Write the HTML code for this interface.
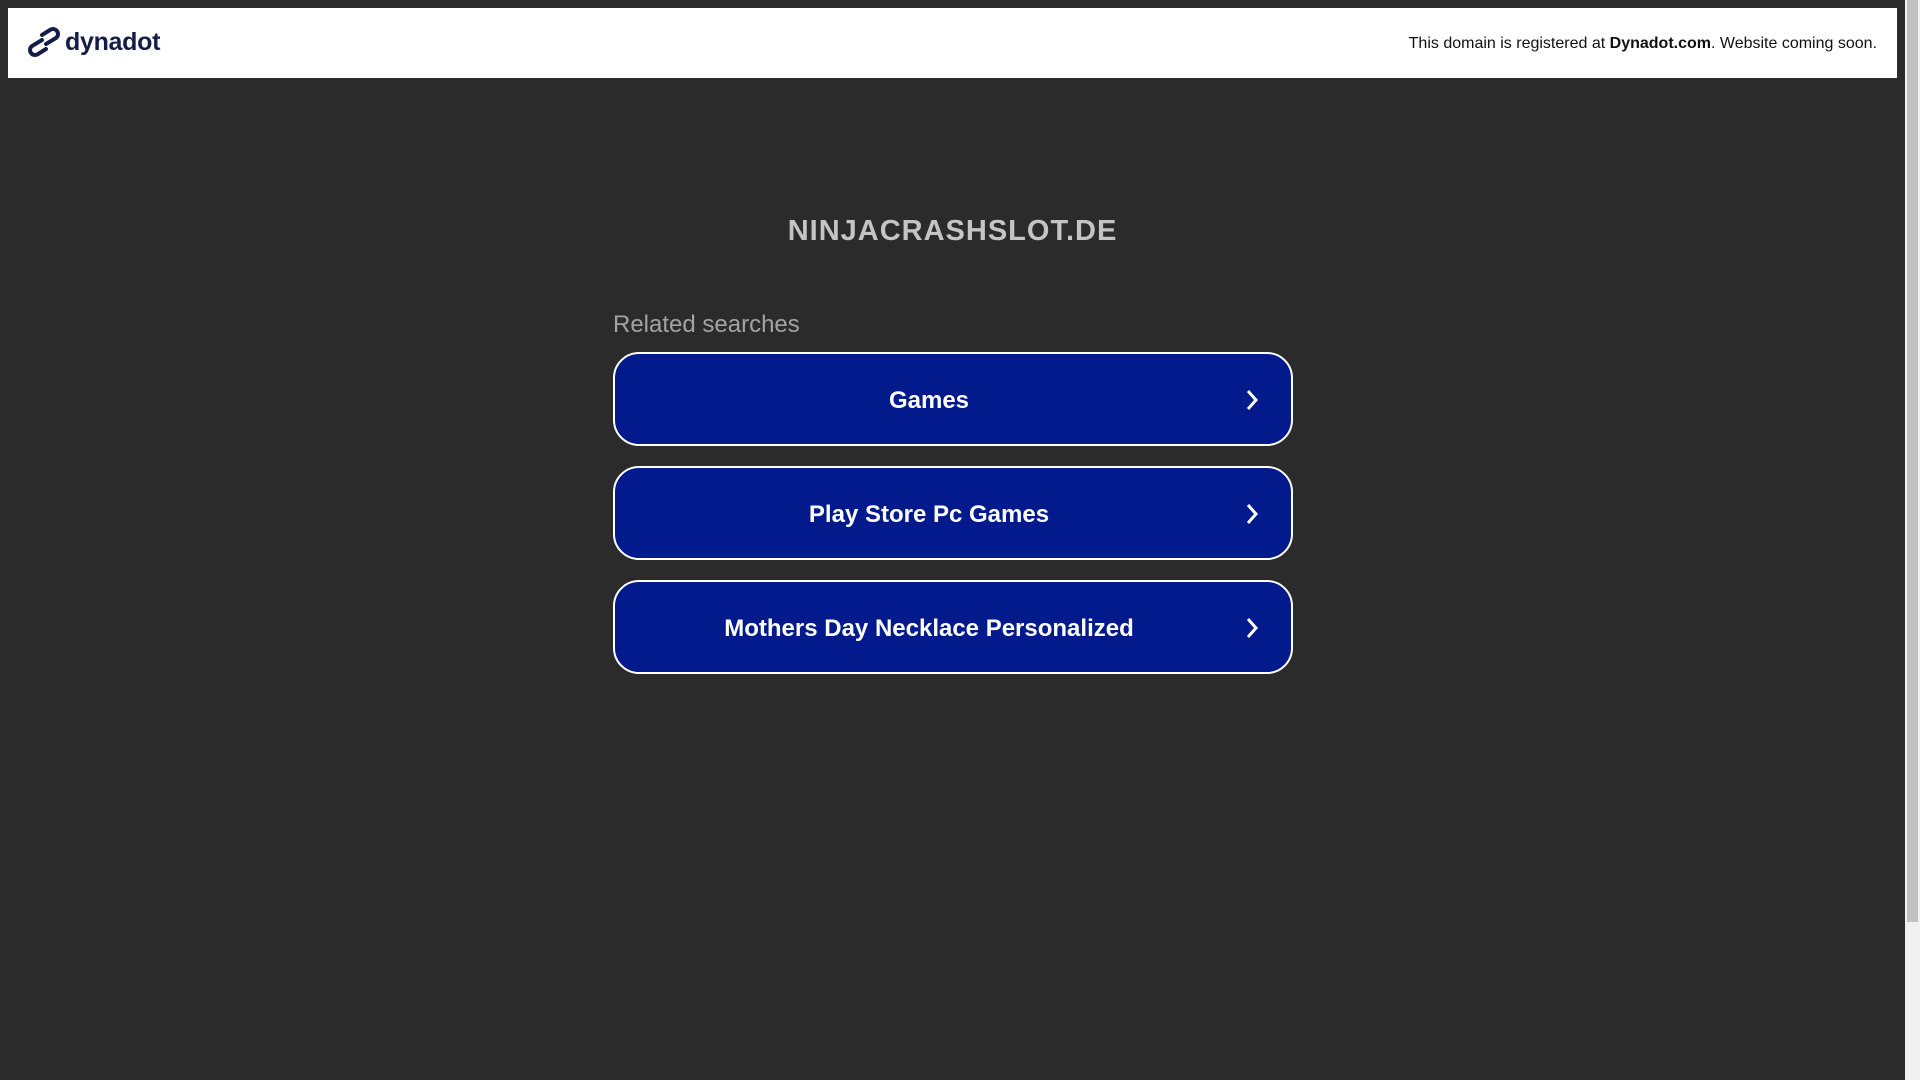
<!DOCTYPE html>
<html><head><meta charset="utf-8"><style>
html,body{margin:0;padding:0}
body{width:1920px;height:1080px;background:#2b2b2b;position:relative;overflow:hidden;font-family:"Liberation Sans",Arial,sans-serif}
.sb{position:absolute;left:1905px;top:0;width:15px;height:1080px;background:#f1f1f1}
.sb i{position:absolute;left:2px;top:0;width:11px;height:922px;background:#c1c1c1}
.hdr{position:absolute;left:8px;top:8px;width:1889px;height:70px;background:#fff}
.logo{position:absolute;left:20px;top:19px;display:flex;align-items:center}
.logo span{font-weight:bold;font-size:25px;color:#151c47;margin-left:5px;letter-spacing:-0.3px}
.rt{position:absolute;right:20px;top:27px;font-size:16px;color:#111}
h1{position:absolute;left:0;width:1905px;top:215px;margin:0;text-align:center;font-size:29px;color:#c4c4c4;letter-spacing:1px}
.rs{position:absolute;left:613px;top:311px;font-size:24px;color:#a3a3a3}
.btn{position:absolute;left:613px;width:676px;height:90px;border:2px solid #fff;border-radius:26px;background:#021a8c;color:#fff;font-weight:bold;font-size:24px}
.btn span{position:absolute;left:0;width:628px;text-align:center;top:33px}
.btn svg{position:absolute;left:629px;top:35px}
</style></head><body>
<div class="hdr">
 <div class="logo"><svg width="32" height="30" viewBox="0 0 32 30"><g fill="none" stroke="#151c47" stroke-width="4" stroke-linecap="round"><path d="M14 8 L22 3 A5 5 0 0 1 28 11 L18 17"/><path d="M18 22 L10 27 A5 5 0 0 1 4 19 L14 13"/></g></svg><span>dynadot</span></div>
 <div class="rt">This domain is registered at <b>Dynadot.com</b>. Website coming soon.</div>
</div>
<h1>NINJACRASHSLOT.DE</h1>
<div class="rs">Related searches</div>
<div class="btn" style="top:352px"><span>Games</span><svg width="16" height="22" viewBox="0 0 16 22"><path d="M4 2 L12 11 L4 20" fill="none" stroke="#fff" stroke-width="3"/></svg></div>
<div class="btn" style="top:466px"><span>Play Store Pc Games</span><svg width="16" height="22" viewBox="0 0 16 22"><path d="M4 2 L12 11 L4 20" fill="none" stroke="#fff" stroke-width="3"/></svg></div>
<div class="btn" style="top:580px"><span>Mothers Day Necklace Personalized</span><svg width="16" height="22" viewBox="0 0 16 22"><path d="M4 2 L12 11 L4 20" fill="none" stroke="#fff" stroke-width="3"/></svg></div>
<div class="sb"><i></i></div>
</body></html>
